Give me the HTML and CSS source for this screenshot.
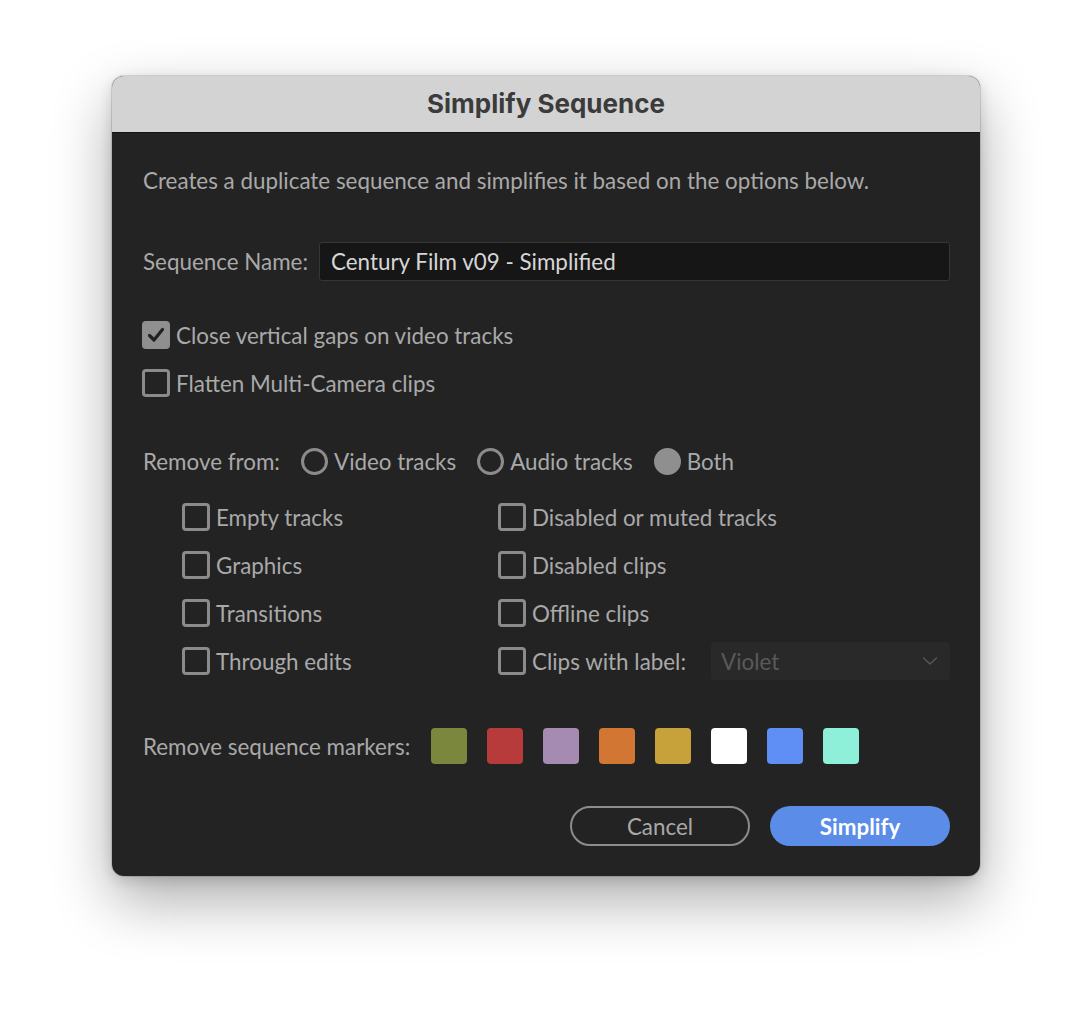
FILE: index.html
```html
<!DOCTYPE html>
<html>
<head>
<meta charset="utf-8">
<link rel="stylesheet" href="styles.css">
</head>
<body>
<div class="dialog">
  <div class="titlebar">Simplify Sequence</div>
  <div class="content">
    <p class="desc">Creates a duplicate sequence and simplifies it based on the options below.</p>
    <div class="name-row">
      <span class="label">Sequence Name:</span>
      <div class="input">Century Film v09 - Simplified</div>
    </div>
    <div class="check-row first">
      <span class="box checked"><svg viewBox="0 0 28 28" width="28" height="28"><path d="M7.5 14.5 L12 19 L20.5 8.5" fill="none" stroke="#222" stroke-width="3.2" stroke-linecap="round" stroke-linejoin="round"/></svg></span>
      <span class="text">Close vertical gaps on video tracks</span>
    </div>
    <div class="check-row second">
      <span class="box"></span>
      <span class="text">Flatten Multi-Camera clips</span>
    </div>
    <div class="radio-row">
      <span class="label">Remove from:</span>
      <span class="radio-group"><span class="radio"></span><span class="text">Video tracks</span></span>
      <span class="radio-group"><span class="radio"></span><span class="text">Audio tracks</span></span>
      <span class="radio-group"><span class="radio on"></span><span class="text">Both</span></span>
    </div>
    <div class="grid">
      <div class="cell"><span class="box"></span><span class="text">Empty tracks</span></div>
      <div class="cell"><span class="box"></span><span class="text">Disabled or muted tracks</span></div>
      <div class="cell"><span class="box"></span><span class="text">Graphics</span></div>
      <div class="cell"><span class="box"></span><span class="text">Disabled clips</span></div>
      <div class="cell"><span class="box"></span><span class="text">Transitions</span></div>
      <div class="cell"><span class="box"></span><span class="text">Offline clips</span></div>
      <div class="cell"><span class="box"></span><span class="text">Through edits</span></div>
      <div class="cell"><span class="box"></span><span class="text">Clips with label:</span>
        <div class="select"><span>Violet</span><svg viewBox="0 0 16 10" width="16" height="10"><path d="M1.5 2 L8 8 L14.5 2" fill="none" stroke="#555" stroke-width="1.6" stroke-linecap="round" stroke-linejoin="round"/></svg></div>
      </div>
    </div>
    <div class="markers-row">
      <span class="label">Remove sequence markers:</span>
      <span class="marker m-green"></span>
      <span class="marker m-red"></span>
      <span class="marker m-violet"></span>
      <span class="marker m-orange"></span>
      <span class="marker m-yellow"></span>
      <span class="marker m-white"></span>
      <span class="marker m-blue"></span>
      <span class="marker m-mint"></span>
    </div>
    <div class="buttons">
      <button class="btn cancel">Cancel</button>
      <button class="btn primary">Simplify</button>
    </div>
  </div>
</div>
</body>
</html>
```
FILE: styles.css
```css
html, body {
  margin: 0;
  padding: 0;
  background: #ffffff;
}
body {
  min-height: 1024px;
  box-sizing: border-box;
  padding: 76px 0 0 112px;
  font-family: "Lato", "Noto Sans", sans-serif;
}
.dialog {
  width: 868px;
  height: 800px;
  border-radius: 12px;
  overflow: hidden;
  background: #232323;
  box-shadow: 0 0 0 1px rgba(0,0,0,0.12), 0 24px 60px rgba(0,0,0,0.33), 0 4px 14px rgba(0,0,0,0.14);
}
.titlebar {
  height: 55px;
  background: #d3d3d3;
  border-bottom: 1px solid #151515;
  display: flex;
  align-items: center;
  justify-content: center;
  font-family: "Inter", "Liberation Sans", sans-serif;
  font-weight: 700;
  font-size: 26px;
  color: #3b3b3b;
  padding-bottom: 1px;
}
.content {
  padding: 35px 30px 0 31px;
  color: #a9a9a9;
  font-size: 22.4px;
}
.desc {
  margin: 0;
  line-height: 26px;
  height: 26px;
}
.name-row {
  margin-top: 48px;
  display: flex;
  align-items: center;
  gap: 11px;
}
.input {
  flex: 1;
  height: 37px;
  background: #161616;
  border: 1px solid #363636;
  border-radius: 3px;
  color: #d6d6d6;
  display: flex;
  align-items: center;
  padding-left: 11px;
}
.check-row {
  display: flex;
  align-items: center;
  gap: 6px;
  height: 28px;
  margin-left: -1px;
}
.check-row.first { margin-top: 40px; }
.check-row.second { margin-top: 20px; }
.box {
  width: 28px;
  height: 28px;
  box-sizing: border-box;
  border: 3px solid #8b8b8b;
  border-radius: 4px;
  flex: none;
  display: flex;
  align-items: center;
  justify-content: center;
}
.box.checked {
  background: #8f8f8f;
  border-color: #8f8f8f;
}
.box.checked svg { flex: none; }
.radio-row {
  margin-top: 50px;
  height: 28px;
  display: flex;
  align-items: center;
}
.radio-row .label { margin-right: 21px; }
.radio-group {
  display: flex;
  align-items: center;
  gap: 6px;
  margin-right: 21px;
}
.radio {
  width: 27px;
  height: 27px;
  box-sizing: border-box;
  border: 3px solid #8b8b8b;
  border-radius: 50%;
  flex: none;
}
.radio.on {
  background: #8f8f8f;
  border-color: #8f8f8f;
}
.grid {
  margin-top: 23px;
  margin-left: 39px;
  display: grid;
  grid-template-columns: 316px 1fr;
  grid-auto-rows: 38px;
  row-gap: 10px;
}
.cell {
  display: flex;
  align-items: center;
  gap: 6px;
}
.select {
  margin-left: 19px;
  flex: 1;
  height: 38px;
  background: #292929;
  border-radius: 3px;
  display: flex;
  align-items: center;
  justify-content: space-between;
  padding: 0 12px 0 10px;
  color: #595959;
}
.markers-row {
  margin-top: 48px;
  height: 36px;
  display: flex;
  align-items: center;
  gap: 20px;
}
.markers-row .label { margin-right: 1px; }
.marker {
  width: 36px;
  height: 36px;
  border-radius: 4px;
  flex: none;
}
.m-green { background: #7a873c; }
.m-red { background: #b83b3b; }
.m-violet { background: #a58ab2; }
.m-orange { background: #d27634; }
.m-yellow { background: #c7a23b; }
.m-white { background: #ffffff; }
.m-blue { background: #5f8ef4; }
.m-mint { background: #8ef0d8; }
.buttons {
  margin-top: 42px;
  display: flex;
  justify-content: flex-end;
  gap: 20px;
}
.btn {
  width: 180px;
  height: 40px;
  border-radius: 20px;
  font-family: "Lato", "Noto Sans", sans-serif;
  font-size: 22.4px;
  box-sizing: border-box;
  padding: 0;
}
.cancel {
  background: transparent;
  border: 2px solid #8c8c8c;
  color: #a9a9a9;
}
.primary {
  background: #5a8ce8;
  border: none;
  color: #ffffff;
  font-weight: 700;
}
```
